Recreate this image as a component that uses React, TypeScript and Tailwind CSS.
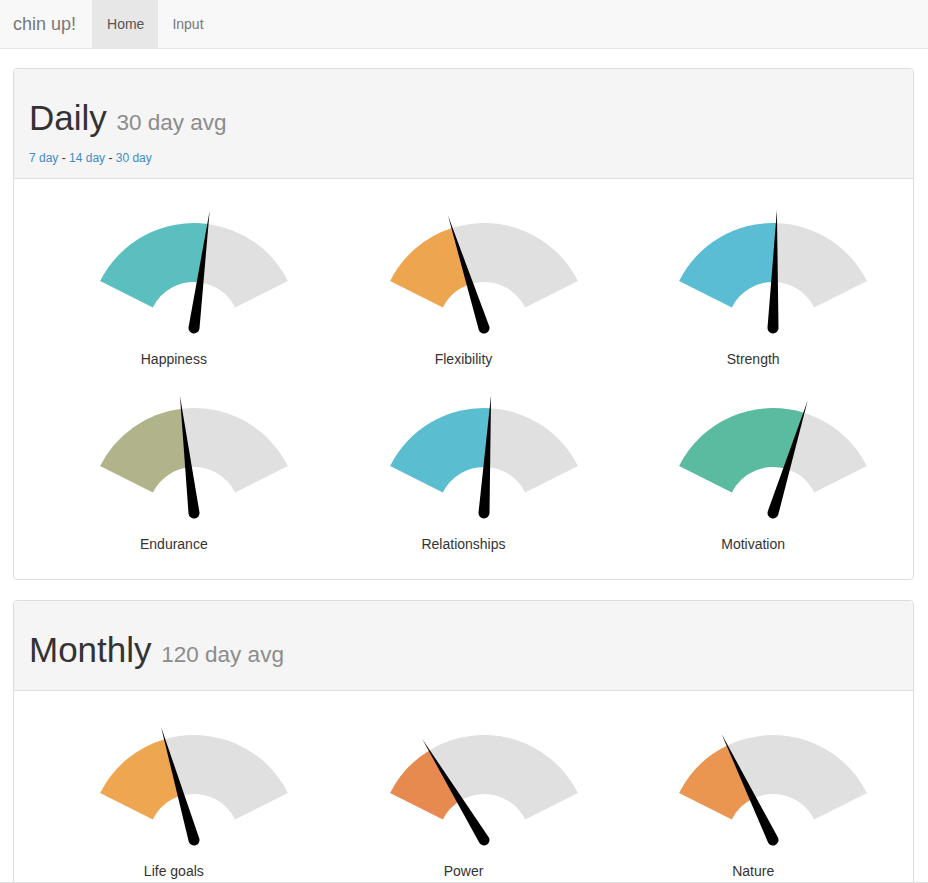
import React from 'react';

type Gauge = { label: string; value: number; color: string };

const daily: Gauge[] = [
  { label: 'Happiness', value: 0.56, color: '#5bbfc0' },
  { label: 'Flexibility', value: 0.36, color: '#eda54f' },
  { label: 'Strength', value: 0.515, color: '#5bbdd3' },
  { label: 'Endurance', value: 0.446, color: '#b1b38b' },
  { label: 'Relationships', value: 0.527, color: '#5bbdd0' },
  { label: 'Motivation', value: 0.635, color: '#5bbba1' },
];

const monthly: Gauge[] = [
  { label: 'Life goals', value: 0.372, color: '#eea650' },
  { label: 'Power', value: 0.252, color: '#e68a4f' },
  { label: 'Nature', value: 0.296, color: '#ea9650' },
];

const SPAN = 63.43;
const CX = 150;
const CY = 134;
const R_OUT = 105;
const R_IN = 46;

const pt = (deg: number, r: number) => {
  const t = (deg * Math.PI) / 180;
  return [CX + r * Math.sin(t), CY - r * Math.cos(t)];
};

const sector = (a0: number, a1: number) => {
  const [x0, y0] = pt(a0, R_OUT);
  const [x1, y1] = pt(a1, R_OUT);
  const [x2, y2] = pt(a1, R_IN);
  const [x3, y3] = pt(a0, R_IN);
  const large = a1 - a0 > 180 ? 1 : 0;
  return `M${x0} ${y0} A${R_OUT} ${R_OUT} 0 ${large} 1 ${x1} ${y1} L${x2} ${y2} A${R_IN} ${R_IN} 0 ${large} 0 ${x3} ${y3} Z`;
};

const GaugeView: React.FC<{ g: Gauge }> = ({ g }) => {
  const angle = -SPAN + g.value * SPAN * 2;
  const t = (angle * Math.PI) / 180;
  const [tx, ty] = pt(angle, 118);
  const w = 5.5;
  const px = Math.cos(t) * w;
  const py = Math.sin(t) * w;
  const needle = `M${CX - px} ${CY - py} L${tx} ${ty} L${CX + px} ${CY + py} A${w} ${w} 0 0 1 ${CX - px} ${CY - py} Z`;

  return (
    <div className="flex flex-col items-center px-[15px] mb-[10px]">
      <svg width="260" height="155" viewBox="0 0 260 155">
        <path d={sector(-SPAN, angle)} fill={g.color} />
        <path d={sector(angle, SPAN)} fill="#e0e0e0" />
        <path d={needle} fill="#000" />
      </svg>
      <div className="text-[14px] leading-[20px] text-[#333]">{g.label}</div>
    </div>
  );
};

const Panel: React.FC<{ title: string; sub: string; links?: boolean; gauges: Gauge[] }> = ({ title, sub, links, gauges }) => (
  <div className="border border-[#ddd] rounded-[4px] bg-white mb-[20px] overflow-hidden">
    <div className={`bg-[#f5f5f5] border-b border-[#ddd] px-[15px] pt-[10px] ${links ? 'pb-[11px]' : 'pb-[10px]'}`}>
      <h1 className="mt-[20px] mb-[11px] text-[35px] leading-[1.1] text-[#333]">
        {title} <span className="text-[22.5px] text-[#8c8c8c]">{sub}</span>
      </h1>
      {links && (
        <div className="text-[12px] leading-[18px] text-[#333]">
          <a className="text-[#428bca]">7 day</a> - <a className="text-[#428bca]">14 day</a> -{' '}
          <a className="text-[#428bca]">30 day</a>
        </div>
      )}
    </div>
    <div className="p-[15px] grid grid-cols-3">
      {gauges.map(g => (
        <GaugeView key={g.label} g={g} />
      ))}
    </div>
  </div>
);

export default function App() {
  return (
    <div className="min-h-screen bg-white" style={{ fontFamily: '"Liberation Sans", Arial, sans-serif' }}>
      <div className="h-[49px] bg-[#f8f8f8] border-b border-[#e7e7e7] flex items-stretch mb-[19px]">
        <div className="pl-[13px] pr-[16px] flex items-center text-[18px] text-[#777]">chin up!</div>
        <div className="pl-[15px] pr-[14px] flex items-center text-[14px] text-[#555] bg-[#e7e7e7]">Home</div>
        <div className="pl-[14px] pr-[15px] flex items-center text-[14px] text-[#777]">Input</div>
      </div>
      <div className="ml-[13px] mr-[14px]">
        <Panel title="Daily" sub="30 day avg" links gauges={daily} />
        <Panel title="Monthly" sub="120 day avg" gauges={monthly} />
      </div>
      <div className="fixed left-0 right-0 bottom-0 h-[1px] bg-[#ddd]" />
    </div>
  );
}
